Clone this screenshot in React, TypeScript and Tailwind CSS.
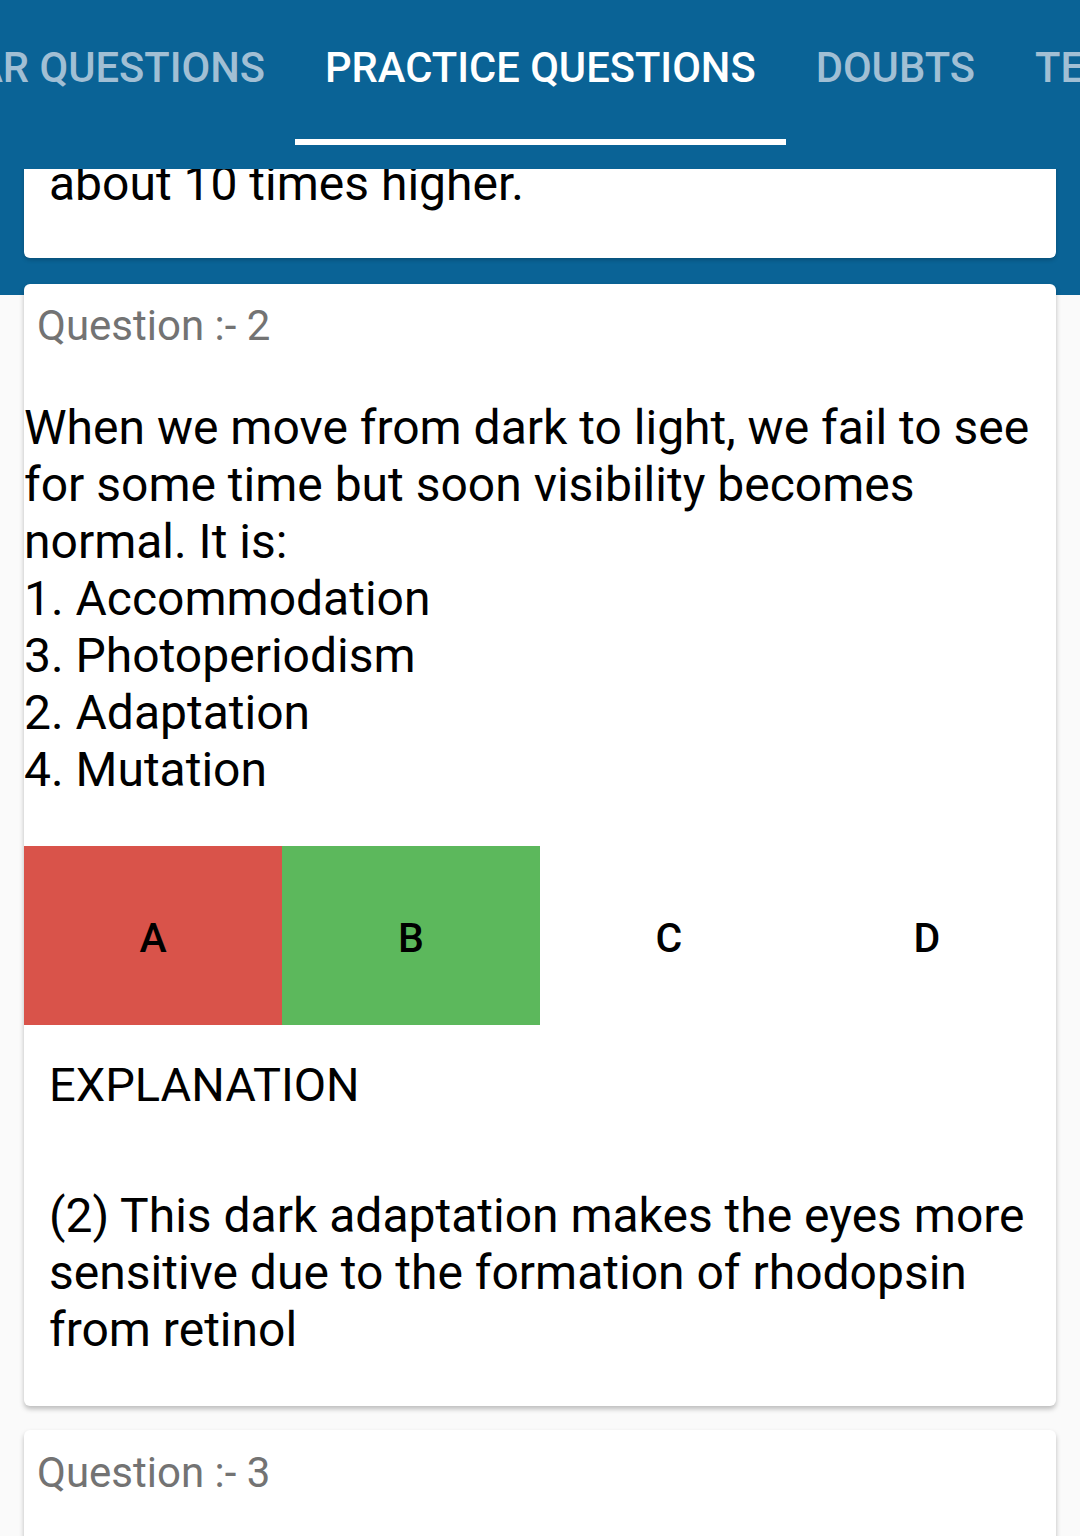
const tabs = [
  { label: 'PREVIOUS YEAR QUESTIONS', active: false },
  { label: 'PRACTICE QUESTIONS', active: true },
  { label: 'DOUBTS', active: false },
  { label: 'TEST SERIES', active: false },
]

const questionLines = [
  'When we move from dark to light, we fail to see for some time but soon visibility becomes normal. It is:',
  '1. Accommodation',
  '3. Photoperiodism',
  '2. Adaptation',
  '4. Mutation',
]

const options = [
  { key: 'A', color: 'bg-[#d9534a]' },
  { key: 'B', color: 'bg-[#5cb85c]' },
  { key: 'C', color: 'bg-white' },
  { key: 'D', color: 'bg-white' },
]

function Tab({ label, active }: { label: string; active: boolean }) {
  return (
    <div className="relative h-[145px] shrink-0 px-[30px] pt-[43px] whitespace-nowrap">
      <span
        className={`block text-[41.7px] leading-[50px] font-medium ${
          active ? 'text-white' : 'text-[#a1bfd4]'
        }`}
      >
        {label}
      </span>
      {active && <span className="absolute left-0 right-0 bottom-0 h-[6px] bg-white" />}
    </div>
  )
}

export default function App() {
  return (
    <div className="w-[1080px] h-[1536px] overflow-hidden bg-[#fafafa] font-['Roboto',sans-serif]">
      {/* Tab bar */}
      <div className="h-[169px] bg-[#0a6396] flex">
        <div className="w-[295px] shrink-0 overflow-hidden flex justify-end">
          <Tab label={tabs[0].label} active={false} />
        </div>
        {tabs.slice(1).map((t) => (
          <Tab key={t.label} label={t.label} active={t.active} />
        ))}
      </div>

      {/* Scroll content */}
      <div className="h-[1367px] overflow-hidden px-[24px] bg-[linear-gradient(to_bottom,#0a6396_126px,#fafafa_126px)]">
        {/* Previous card (scrolled off) */}
        <div className="mt-[-14px] bg-white rounded-[6px] shadow-[0_2px_4px_rgba(0,0,0,0.2)] px-[25px] pb-[46px]">
          <p className="text-[48px] leading-[57px] text-black">about 10 times higher.</p>
        </div>

        {/* Question 2 */}
        <div className="mt-[26px] bg-white rounded-[6px] shadow-[0_3px_5px_rgba(0,0,0,0.25)] pb-[48px]">
          <p className="px-[13px] pt-[19px] text-[42px] leading-[46px] text-[#737373]">Question :- 2</p>
          <div className="mt-[50px] text-[48px] leading-[57px] text-black pr-[20px]">
            {questionLines.map((l) => (
              <p key={l}>{l}</p>
            ))}
          </div>
          <div className="mt-[48px] grid grid-cols-4 h-[179px]">
            {options.map((o) => (
              <div key={o.key} className={`${o.color} flex items-center justify-center pt-[6px]`}>
                <span className="text-[41px] font-medium text-black">{o.key}</span>
              </div>
            ))}
          </div>
          <p className="mt-[31px] px-[25px] text-[47px] leading-[57px] text-black">EXPLANATION</p>
          <p className="mt-[74px] px-[25px] text-[48px] leading-[57px] text-black">
            (2) This dark adaptation makes the eyes more sensitive due to the formation of rhodopsin from retinol
          </p>
        </div>

        {/* Question 3 */}
        <div className="mt-[24px] bg-white rounded-[6px] shadow-[0_3px_5px_rgba(0,0,0,0.25)] h-[200px]">
          <p className="px-[13px] pt-[20px] text-[42px] leading-[46px] text-[#737373]">Question :- 3</p>
        </div>
      </div>
    </div>
  )
}
